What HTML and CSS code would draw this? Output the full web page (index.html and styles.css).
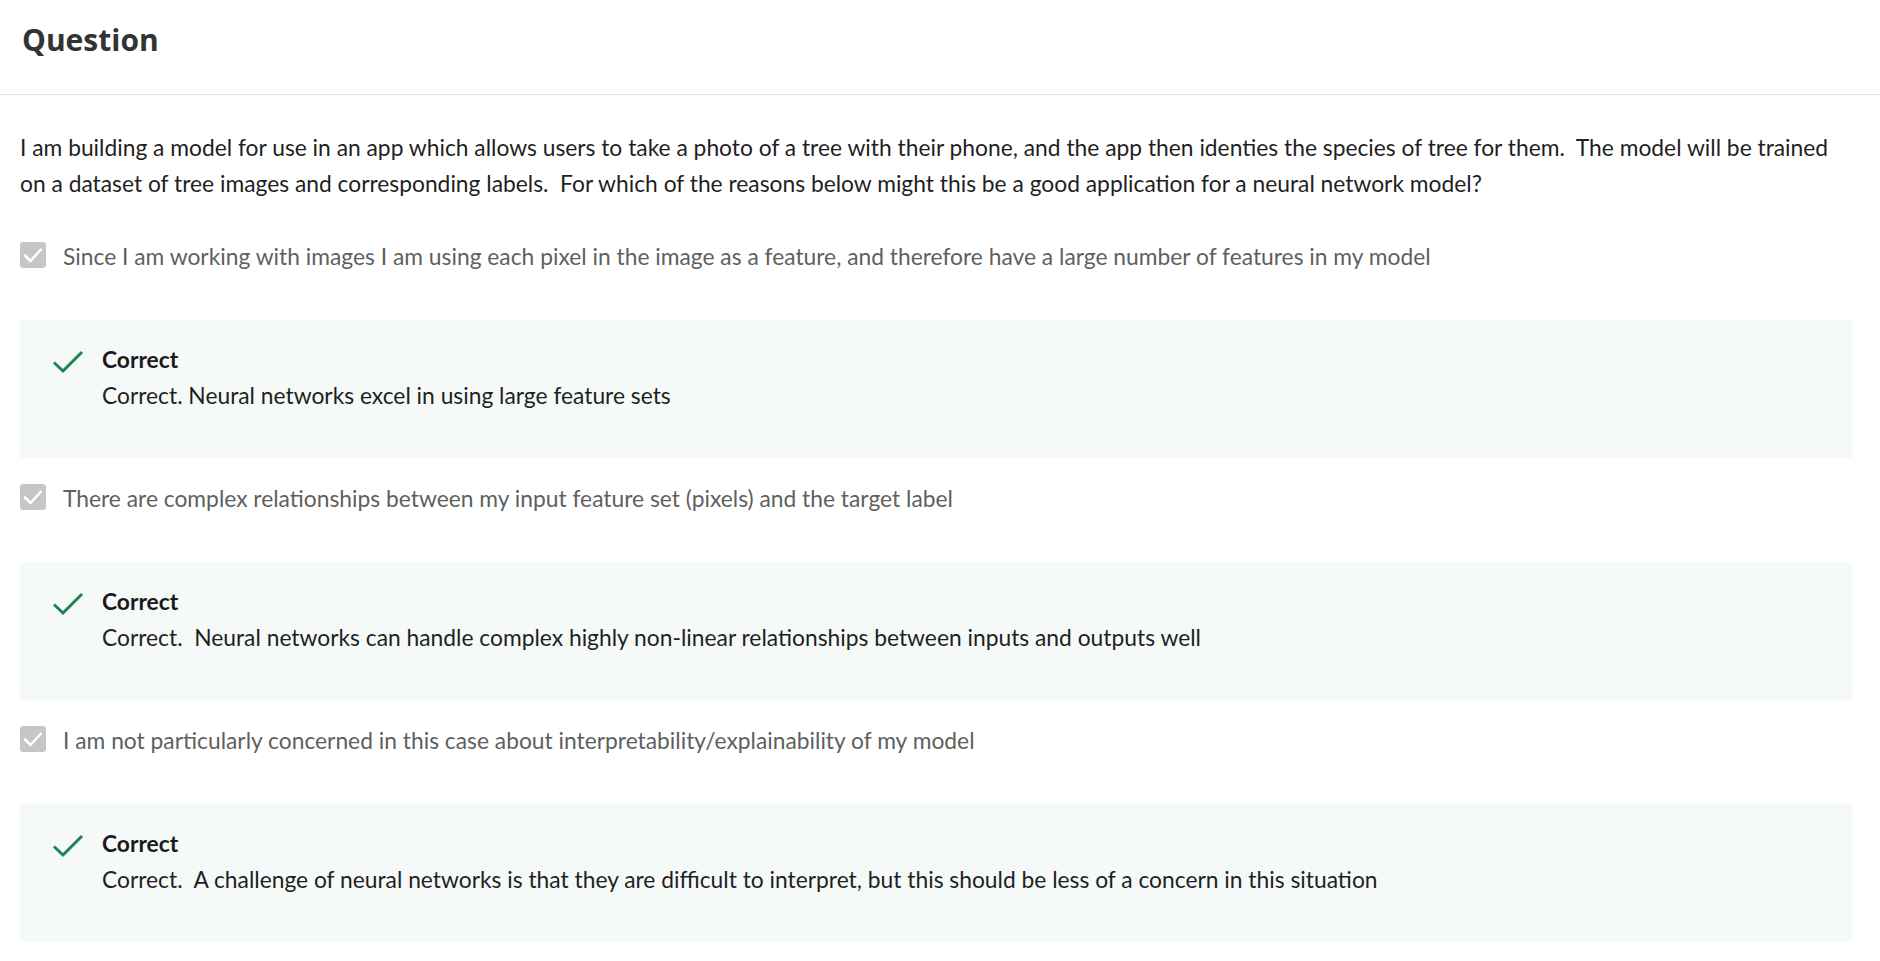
FILE: index.html
```html
<!DOCTYPE html>
<html lang="en">
<head>
<meta charset="utf-8">
<title>Question</title>
<link rel="stylesheet" href="styles.css">
</head>
<body>
<header class="header">
  <h1 class="title">Question</h1>
</header>
<main class="content">
  <p class="prompt">I am building a model for use in an app which allows users to take a photo of a tree with their phone, and the app then identies the species of tree for them.&nbsp; The model will be trained on a dataset of tree images and corresponding labels.&nbsp; For which of the reasons below might this be a good application for a neural network model?</p>

  <div class="option">
    <span class="checkbox"><svg viewBox="0 0 26 26" width="26" height="26"><path d="M5 13.5 L10.5 19 L21 7.5" fill="none" stroke="#fff" stroke-width="2.5" stroke-linecap="round" stroke-linejoin="round"/></svg></span>
    <span class="option-text">Since I am working with images I am using each pixel in the image as a feature, and therefore have a large number of features in my model</span>
  </div>
  <div class="feedback">
    <svg class="feedback-icon" viewBox="0 0 32 24" width="32" height="24"><path d="M2 12.5 L11 21 L30 2" fill="none" stroke="#1f8354" stroke-width="3"/></svg>
    <div class="feedback-body">
      <div class="feedback-title">Correct</div>
      <div class="feedback-text">Correct. Neural networks excel in using large feature sets</div>
    </div>
  </div>

  <div class="option">
    <span class="checkbox"><svg viewBox="0 0 26 26" width="26" height="26"><path d="M5 13.5 L10.5 19 L21 7.5" fill="none" stroke="#fff" stroke-width="2.5" stroke-linecap="round" stroke-linejoin="round"/></svg></span>
    <span class="option-text">There are complex relationships between my input feature set (pixels) and the target label</span>
  </div>
  <div class="feedback">
    <svg class="feedback-icon" viewBox="0 0 32 24" width="32" height="24"><path d="M2 12.5 L11 21 L30 2" fill="none" stroke="#1f8354" stroke-width="3"/></svg>
    <div class="feedback-body">
      <div class="feedback-title">Correct</div>
      <div class="feedback-text">Correct.&nbsp; Neural networks can handle complex highly non-linear relationships between inputs and outputs well</div>
    </div>
  </div>

  <div class="option">
    <span class="checkbox"><svg viewBox="0 0 26 26" width="26" height="26"><path d="M5 13.5 L10.5 19 L21 7.5" fill="none" stroke="#fff" stroke-width="2.5" stroke-linecap="round" stroke-linejoin="round"/></svg></span>
    <span class="option-text">I am not particularly concerned in this case about interpretability/explainability of my model</span>
  </div>
  <div class="feedback">
    <svg class="feedback-icon" viewBox="0 0 32 24" width="32" height="24"><path d="M2 12.5 L11 21 L30 2" fill="none" stroke="#1f8354" stroke-width="3"/></svg>
    <div class="feedback-body">
      <div class="feedback-title">Correct</div>
      <div class="feedback-text">Correct.&nbsp; A challenge of neural networks is that they are difficult to interpret, but this should be less of a concern in this situation</div>
    </div>
  </div>
</main>
</body>
</html>
```
FILE: styles.css
```css
html, body {
  margin: 0;
  padding: 0;
  background: #ffffff;
}

body {
  font-family: "Lato", "Liberation Sans", sans-serif;
  font-size: 22.8px;
  line-height: 36px;
  color: #1f1f1f;
}

.header {
  padding: 16px 22px 30px;
  border-bottom: 1px solid #e1e1e1;
}

.title {
  margin: 0;
  font-family: "Open Sans", "Liberation Sans", sans-serif;
  font-weight: 700;
  font-size: 30px;
  line-height: 48px;
  color: #333333;
}

.content {
  padding: 34px 28px 0 20px;
}

.prompt {
  margin: 0 0 37px;
  padding-right: 16px;
}

.option {
  display: flex;
  align-items: flex-start;
  gap: 17px;
  margin-bottom: 46px;
}

.checkbox {
  flex: none;
  width: 26px;
  height: 26px;
  margin-top: 4px;
  border-radius: 3px;
  background: #c6c6c6;
  display: flex;
}

.option-text {
  color: #5f5f5f;
}

.feedback {
  display: flex;
  align-items: flex-start;
  gap: 18px;
  background: #f5f9f8;
  padding: 21px 24px 45px 32px;
  margin-bottom: 22px;
}

.feedback-icon {
  flex: none;
  margin-top: 9px;
}

.feedback-title {
  font-weight: 700;
  color: #1a1a1a;
}

.feedback-text {
  color: #1f1f1f;
}
```
